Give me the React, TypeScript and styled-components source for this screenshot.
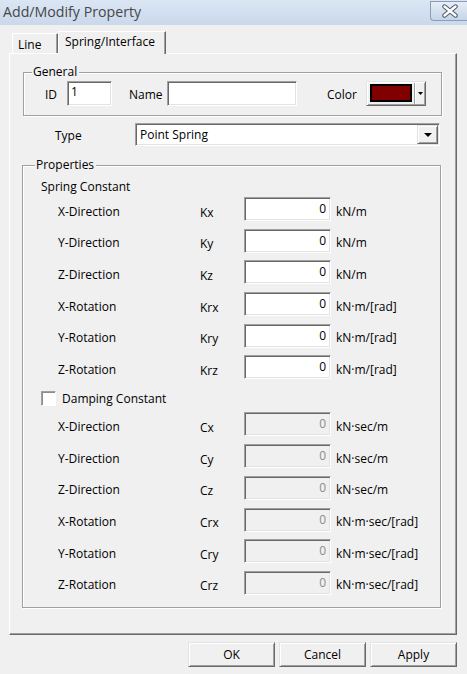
import React from "react";
import styled, { createGlobalStyle, css } from "styled-components";

const GlobalStyle = createGlobalStyle`
  html, body {
    margin: 0;
    padding: 0;
    background: #f0f0f0;
  }
  body {
    font-family: "Open Sans", "Noto Sans", "Liberation Sans", sans-serif;
    font-size: 12px;
    color: #000;
  }
  * { box-sizing: border-box; }
`;

const sunken = css`
  border: 1px solid;
  border-color: #a0a0a0 #ffffff #ffffff #a0a0a0;
  box-shadow: inset 1px 1px 0 #696969, inset -1px -1px 0 #e3e3e3;
`;

const raised = css`
  border: 1px solid;
  border-color: #e3e3e3 #696969 #696969 #e3e3e3;
  box-shadow: inset 1px 1px 0 #ffffff, inset -1px -1px 0 #a0a0a0;
`;

const Window = styled.div`
  width: 467px;
  height: 674px;
  display: flex;
  flex-direction: column;
  background: #f0f0f0;
  overflow: hidden;
`;

const TitleBar = styled.div`
  height: 25px;
  display: flex;
  align-items: flex-start;
  justify-content: space-between;
  background: linear-gradient(#dbe6f4, #c9d8eb);
`;

const Title = styled.span`
  padding: 1px 0 0 3px;
  font-size: 14.2px;
  line-height: 22px;
  color: #474747;
`;

const CloseButton = styled.div`
  width: 38px;
  height: 20px;
  margin-top: 1px;
  margin-right: -1px;
  display: flex;
  align-items: center;
  justify-content: center;
  border: 1px solid #8c9db3;
  border-right: none;
  border-radius: 0 0 0 4px;
  background: linear-gradient(#e6eef8, #c5d4e7);
`;

const Body = styled.div`
  flex: 1;
  display: flex;
  flex-direction: column;
  padding: 6px 10px 0 9px;
`;

const TabStrip = styled.div`
  height: 22px;
  display: flex;
  align-items: flex-end;
  padding-left: 3px;
  position: relative;
  z-index: 1;
`;

const Tab = styled.div<{ $active?: boolean; $width: number }>`
  width: ${(p) => p.$width}px;
  height: ${(p) => (p.$active ? 23 : 20)}px;
  margin-bottom: ${(p) => (p.$active ? -1 : 0)}px;
  padding: ${(p) => (p.$active ? "2px 0 0 6px" : "3px 0 0 5px")};
  line-height: 16px;
  background: #f0f0f0;
  border-top: 1px solid #ffffff;
  border-left: 1px solid #ffffff;
  border-right: 1px solid #696969;
  box-shadow: inset -1px 0 0 #a0a0a0;
`;

const TabPanel = styled.div`
  width: 448px;
  height: 582px;
  display: flex;
  flex-direction: column;
  padding: 11px 0 0 13px;
  border-top: 1px solid #ffffff;
  border-left: 1px solid #ffffff;
  border-right: 1px solid #696969;
  border-bottom: 1px solid #696969;
  box-shadow: inset -1px -1px 0 #a0a0a0;
`;

const Group = styled.fieldset<{ $shift?: number; $width: number; $height: number }>`
  margin: 0 0 0 ${(p) => p.$shift ?? 0}px;
  width: ${(p) => p.$width}px;
  height: ${(p) => p.$height}px;
  min-inline-size: 0;
  padding: 0;
  border: 1px solid #a0a0a0;
  box-shadow: inset 1px 1px 0 #ffffff, 1px 1px 0 #ffffff;
`;

const Legend = styled.legend<{ $indent: number }>`
  margin-left: ${(p) => p.$indent}px;
  padding: 0 2px 0 1px;
  line-height: 14px;
  background: #f0f0f0;
`;

const GeneralRow = styled.div`
  display: flex;
  align-items: center;
  padding: 2px 0 0 21px;
`;

const FieldLabel = styled.span<{ $width: number; $gap?: number }>`
  width: ${(p) => p.$width}px;
  margin-left: ${(p) => p.$gap ?? 0}px;
  line-height: 16px;
  padding-top: 2px;
`;

const TextBox = styled.div<{ $width: number; $height?: number; $disabled?: boolean; $right?: boolean }>`
  ${sunken};
  width: ${(p) => p.$width}px;
  height: ${(p) => p.$height ?? 24}px;
  padding: ${(p) => (p.$right ? "3px 4px 0 0" : "2px 0 0 3px")};
  line-height: 16px;
  text-align: ${(p) => (p.$right ? "right" : "left")};
  background: ${(p) => (p.$disabled ? "#f0f0f0" : "#ffffff")};
  color: ${(p) => (p.$disabled ? "#8c8c8c" : "#000")};
`;

const ColorButton = styled.div`
  ${raised};
  width: 60px;
  height: 25px;
  display: flex;
  align-items: center;
  padding: 0 0 0 3px;
`;

const Swatch = styled.div<{ $color: string }>`
  width: 42px;
  height: 18px;
  margin-top: -2px;
  border: 2px solid #000;
  background: ${(p) => p.$color};
`;

const SplitArrow = styled.div`
  flex: 1;
  height: 21px;
  margin-left: 2px;
  display: flex;
  align-items: center;
  justify-content: center;
  border-left: 1px solid #a0a0a0;
  box-shadow: inset 1px 0 0 #ffffff;
`;

const TypeRow = styled.div`
  display: flex;
  align-items: center;
  margin: 7px 0 0 32px;
`;

const Combo = styled.div`
  ${sunken};
  width: 305px;
  height: 23px;
  display: flex;
  align-items: center;
  justify-content: space-between;
  padding: 0 1px 0 4px;
  background: #ffffff;
`;

const ComboButton = styled.div`
  ${raised};
  width: 21px;
  height: 19px;
  display: flex;
  align-items: center;
  justify-content: center;
  background: #f0f0f0;
`;

const PropertiesGroup = styled(Group)`
  margin-top: 12px;
`;

const PropsBody = styled.div`
  padding: 7px 0 0 18px;
`;

const SectionLabel = styled.div`
  line-height: 16px;
  height: 16px;
`;

const ValueGrid = styled.div<{ $top: number }>`
  display: grid;
  grid-template-columns: 142px 44px 87px auto;
  grid-auto-rows: 24px;
  row-gap: 7.7px;
  margin: ${(p) => p.$top}px 0 0 17px;
  align-items: center;
`;

const Cell = styled.span<{ $drop?: number; $gap?: number }>`
  margin-top: ${(p) => p.$drop ?? 5}px;
  margin-left: ${(p) => p.$gap ?? 0}px;
  line-height: 16px;
  white-space: nowrap;
`;

const CheckRow = styled.label`
  display: flex;
  align-items: center;
  height: 16px;
  margin-top: 11px;
  gap: 6px;
`;

const CheckBox = styled.span`
  ${sunken};
  width: 15px;
  height: 15px;
  background: #ffffff;
  box-shadow: inset 1px 1px 0 #8c8c8c;
`;

const ButtonBar = styled.div`
  display: flex;
  justify-content: flex-end;
  gap: 4px;
  margin-top: 7px;
`;

const DialogButton = styled.div`
  ${raised};
  width: 87px;
  height: 25px;
  display: flex;
  align-items: center;
  justify-content: center;
  background: #f0f0f0;
  padding-bottom: 1px;
`;

type Row = { label: string; sym: string; unit: string };

const springRows: Row[] = [
  { label: "X-Direction", sym: "Kx", unit: "kN/m" },
  { label: "Y-Direction", sym: "Ky", unit: "kN/m" },
  { label: "Z-Direction", sym: "Kz", unit: "kN/m" },
  { label: "X-Rotation", sym: "Krx", unit: "kN·m/[rad]" },
  { label: "Y-Rotation", sym: "Kry", unit: "kN·m/[rad]" },
  { label: "Z-Rotation", sym: "Krz", unit: "kN·m/[rad]" },
];

const dampingRows: Row[] = [
  { label: "X-Direction", sym: "Cx", unit: "kN·sec/m" },
  { label: "Y-Direction", sym: "Cy", unit: "kN·sec/m" },
  { label: "Z-Direction", sym: "Cz", unit: "kN·sec/m" },
  { label: "X-Rotation", sym: "Crx", unit: "kN·m·sec/[rad]" },
  { label: "Y-Rotation", sym: "Cry", unit: "kN·m·sec/[rad]" },
  { label: "Z-Rotation", sym: "Crz", unit: "kN·m·sec/[rad]" },
];

const CloseGlyph = () => (
  <svg width="18" height="14" viewBox="0 0 18 14">
    <path d="M3.5 2.5 L14.5 11.5 M14.5 2.5 L3.5 11.5" stroke="#4d5a6b" strokeWidth="4.4" strokeLinecap="round" />
    <path d="M3.5 2.5 L14.5 11.5 M14.5 2.5 L3.5 11.5" stroke="#ffffff" strokeWidth="2.4" strokeLinecap="round" />
  </svg>
);

const DownArrow = ({ w, h }: { w: number; h: number }) => (
  <svg width={w} height={h} viewBox={`0 0 ${w} ${h}`}>
    <polygon points={`0,0 ${w},0 ${w / 2},${h}`} fill="#000" />
  </svg>
);

const Values = ({ rows, disabled, top }: { rows: Row[]; disabled?: boolean; top: number }) => (
  <ValueGrid $top={top}>
    {rows.map((r) => (
      <React.Fragment key={r.sym}>
        <Cell>{r.label}</Cell>
        <Cell $drop={7}>{r.sym}</Cell>
        <TextBox $width={87} $right $disabled={disabled}>
          0
        </TextBox>
        <Cell $gap={5}>{r.unit}</Cell>
      </React.Fragment>
    ))}
  </ValueGrid>
);

export default function App() {
  return (
    <>
      <GlobalStyle />
      <Window>
        <TitleBar>
          <Title>Add/Modify Property</Title>
          <CloseButton>
            <CloseGlyph />
          </CloseButton>
        </TitleBar>
        <Body>
          <TabStrip>
            <Tab $width={46}>Line</Tab>
            <Tab $width={108} $active>
              Spring/Interface
            </Tab>
          </TabStrip>
          <TabPanel>
            <Group $width={419} $height={51}>
              <Legend $indent={8}>General</Legend>
              <GeneralRow>
                <FieldLabel $width={22}>ID</FieldLabel>
                <TextBox $width={45} $height={25}>
                  1
                </TextBox>
                <FieldLabel $width={38} $gap={17}>
                  Name
                </FieldLabel>
                <TextBox $width={130} $height={25} />
                <FieldLabel $width={39} $gap={30}>
                  Color
                </FieldLabel>
                <ColorButton>
                  <Swatch $color="#800000" />
                  <SplitArrow>
                    <DownArrow w={5} h={3} />
                  </SplitArrow>
                </ColorButton>
              </GeneralRow>
            </Group>
            <TypeRow>
              <FieldLabel $width={80}>Type</FieldLabel>
              <Combo>
                <span>Point Spring</span>
                <ComboButton>
                  <DownArrow w={8} h={4} />
                </ComboButton>
              </Combo>
            </TypeRow>
            <PropertiesGroup $shift={-1} $width={419} $height={450}>
              <Legend $indent={12}>Properties</Legend>
              <PropsBody>
                <SectionLabel>Spring Constant</SectionLabel>
                <Values rows={springRows} top={2} />
                <CheckRow>
                  <CheckBox />
                  <span>Damping Constant</span>
                </CheckRow>
                <Values rows={dampingRows} disabled top={6} />
              </PropsBody>
            </PropertiesGroup>
          </TabPanel>
          <ButtonBar>
            <DialogButton>OK</DialogButton>
            <DialogButton>Cancel</DialogButton>
            <DialogButton>Apply</DialogButton>
          </ButtonBar>
        </Body>
      </Window>
    </>
  );
}
